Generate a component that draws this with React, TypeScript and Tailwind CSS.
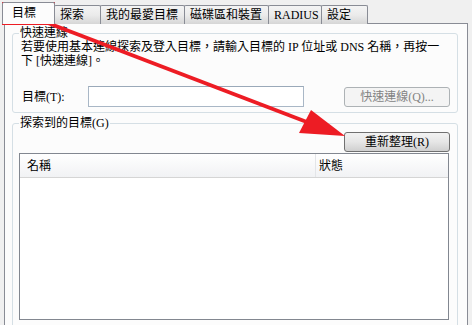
import React from "react";

const font = {
  fontFamily: '"Liberation Serif", "Noto Sans CJK TC", serif',
};

function Tab({ label, w, selected }: { label: string; w: string; selected?: boolean }) {
  if (selected) {
    return (
      <div
        className={`relative z-10 ${w} h-[22px] -mt-[2px] border border-b-0 border-[#898c95] bg-[#fcfcfc] rounded-t-[2px] pl-[9px] pt-[2px] leading-[16px] whitespace-nowrap`}
      >
        {label}
      </div>
    );
  }
  return (
    <div
      className={`${w} h-[19px] -ml-px border border-b-0 border-[#898c95] rounded-t-[2px] bg-linear-to-b from-[#f4f4f4] via-[#ebebeb] to-[#d6d6d6] pl-[5px] pt-[1px] leading-[16px] whitespace-nowrap`}
    >
      {label}
    </div>
  );
}

export default function App() {
  return (
    <div
      className="relative w-[472px] h-[325px] overflow-hidden bg-[#f0f0f0] text-[12px] text-black"
      style={font}
    >
      {/* Tabs */}
      <div className="flex items-end pl-[2px] pt-[4px] h-[24px]">
        <Tab label="目標" w="w-[53px]" selected />
        <Tab label="探索" w="w-[47px]" />
        <Tab label="我的最愛目標" w="w-[85px]" />
        <Tab label="磁碟區和裝置" w="w-[85px]" />
        <Tab label="RADIUS" w="w-[54px]" />
        <Tab label="設定" w="w-[47px]" />
      </div>

      {/* Panel */}
      <div className="ml-[4px] -mt-px w-[464px] h-[320px] border border-[#898c95] bg-[#fcfcfc] pl-[7px] pr-[9px]">
        <fieldset className="mt-[2px] border border-[#d5dfe5] rounded-[3px] pl-[6px] pr-[7px] pb-[5px]">
          <legend className="ml-0 px-[1px] leading-[14px]">快速連線</legend>
          <div className="pl-[2px] leading-[14px] whitespace-nowrap">
            <div>若要使用基本連線探索及登入目標，請輸入目標的 IP 位址或 DNS 名稱，再按一</div>
            <div>下 [快速連線]。</div>
          </div>
          <div className="mt-[18px] flex items-center">
            <div className="w-[69px] pl-[3px] leading-[14px]">目標(T):</div>
            <div className="w-[216px] h-[21px] border border-[#a9b7c6] border-t-[#9aa9b9] bg-white" />
            <div className="ml-auto w-[106px] h-[20px] border border-[#adb2b5] rounded-[3px] bg-[#f4f4f4] text-[#838383] flex items-center justify-center leading-[14px]">
              快速連線(Q)...
            </div>
          </div>
        </fieldset>

        <fieldset className="mt-[3px] h-[240px] border border-[#d5dfe5] rounded-[3px] pl-[6px] pr-[7px]">
          <legend className="px-[1px] leading-[14px]">探索到的目標(G)</legend>
          <div className="mt-[2px] flex justify-end">
            <div className="w-[106px] h-[20px] border border-[#707070] rounded-[3px] bg-linear-to-b from-[#f2f2f2] via-[#e6e6e6] to-[#cfcfcf] flex items-center justify-center leading-[14px]">
              重新整理(R)
            </div>
          </div>
          <div className="mt-px w-[430px] h-[167px] border border-[#828790] bg-white">
            <div className="flex h-[24px] border-b border-[#d5d5d5] bg-linear-to-b from-white to-[#f1f2f4]">
              <div className="w-[296px] pl-[7px] flex items-center border-r border-[#e3e5e8]">名稱</div>
              <div className="pl-[3px] flex items-center">狀態</div>
            </div>
          </div>
        </fieldset>
      </div>

      {/* Annotation overlay */}
      <svg
        className="absolute inset-0 pointer-events-none"
        width="472"
        height="325"
        viewBox="0 0 472 325"
      >
        <rect x="3.5" y="3.5" width="50" height="20" fill="none" stroke="#ed1c24" strokeWidth="3" />
        <line x1="48" y1="23" x2="312" y2="124" stroke="#ed1c24" strokeWidth="4" />
        <polygon points="345,136 311,110 299,133" fill="#ed1c24" />
      </svg>
    </div>
  );
}
